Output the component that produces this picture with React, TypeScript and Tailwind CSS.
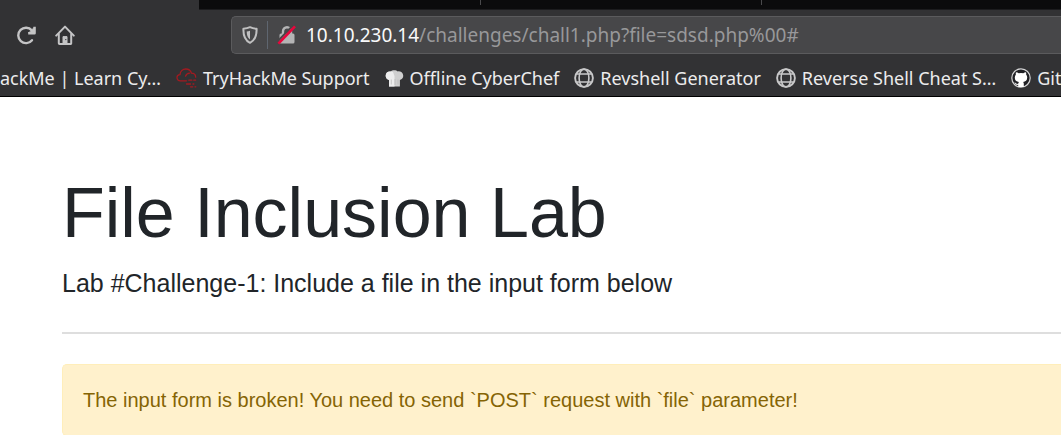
import type { ReactNode } from "react";

function ReloadIcon() {
  return (
    <svg viewBox="0 0 20 20" className="size-5" fill="none" stroke="#c4c4c5" strokeWidth="2.4" strokeLinecap="round" strokeLinejoin="round">
      <path d="M16 15.2A7.700 7.700 0 1 1 15.800 5.400" />
      <path d="M18.600 1.800v6.400h-6.400" strokeLinecap="butt" />
      <path d="M18.200 2.500v5.500h-5.500z" fill="#c4c4c5" strokeWidth="0.5" />
    </svg>
  );
}

function HomeIcon() {
  return (
    <svg viewBox="0 0 20 20" className="size-5" fill="none" stroke="#c4c4c5" strokeWidth="2" strokeLinecap="round" strokeLinejoin="round">
      <path d="M1.2 10.6 10 1.6l8.8 9" />
      <path d="M3.8 9v9.2a.8.8 0 0 0 .8.8h10.8a.8.8 0 0 0 .8-.8V9" />
      <path d="M8 18.6v-7h4v7z" fill="#c4c4c5" strokeWidth="1" />
      <circle cx="10.8" cy="14.6" r=".7" fill="#323234" stroke="none" />
    </svg>
  );
}

function ShieldIcon() {
  return (
    <svg viewBox="0 0 16 18" className="h-[18px] w-4 shrink-0">
      <path d="M8 1.2c2 1 4 1.4 6.6 1.5.2 6.500-1 11.300-6.600 14.100C2.400 14 1.200 9.200 1.400 2.700 4 2.600 6 2.200 8 1.200z" fill="none" stroke="#c0c0c1" strokeWidth="2" strokeLinejoin="round" />
      <path d="M8 4.800v8.600C5.600 11.700 4.800 9.500 4.700 5.600 6 5.500 7 5.300 8 4.800z" fill="#c0c0c1" />
    </svg>
  );
}

function InsecureLockIcon() {
  return (
    <svg viewBox="0 0 20 20" className="size-5 shrink-0">
      <path d="M6 9V6.200a4 4 0 0 1 8 0V9" fill="none" stroke="#b4b4b5" strokeWidth="2.400" />
      <rect x="2.500" y="8.500" width="15" height="10" rx="1.500" fill="#b4b4b5" />
      <path d="M0 17 15.500 1" stroke="#474749" strokeWidth="2" />
      <path d="M1.400 18.600 18 1.400" stroke="#e8063c" strokeWidth="2.600" />
    </svg>
  );
}

function CloudIcon() {
  return (
    <svg viewBox="0 0 21 20" className="h-5 w-[21px] shrink-0" fill="none" stroke="#a31a20" strokeWidth="1.300" strokeLinecap="round">
      <path d="M10.500 12.800H4.300C2 12.800 1 11.300 1 9.600c0-1.800 1.300-3 3-3C4.300 3.200 6.800 1 9.800 1c2.800 0 5 1.600 5.600 4.200 2.500 0 4.200 1.600 4.300 4" />
      <path d="M9.500 8.200c.7-1.800 2.300-2.900 4-3M12.800 12.200h3M17.800 12.200h1.800M10.500 16h4M17 16h.8M14.500 18.800h2.300M19 18.800h.8" />
    </svg>
  );
}

function ChefHatIcon() {
  return (
    <svg viewBox="0 0 19 19" className="size-[19px] shrink-0">
      <path d="M4 17.500V11C1.600 10.300.5 8.600.7 6.300.9 3.700 3 2.200 5.500 2.600 7 .8 11 .6 12.800 2.400c2.700-.4 5 1.200 5.400 3.900.3 2.400-1 4.200-3.300 4.700v6.500z" fill="#cfcfcf" />
      <path d="M4 11v6.500h5.500V7L8 3 5.500 2.600C3 2.200.9 3.700.7 6.300.5 8.600 1.600 10.300 4 11z" fill="#ededed" />
      <path d="M6.300 10.500v5M10 10v6M13 10.500v5" stroke="#b8b8b8" strokeWidth=".7" />
    </svg>
  );
}

function GlobeIcon() {
  return (
    <svg viewBox="0 0 20 20" className="size-5 shrink-0" fill="none" stroke="#c8c8c9" strokeWidth="1.600">
      <circle cx="10" cy="10" r="8.900" strokeWidth="1.900" />
      <ellipse cx="10" cy="10" rx="4.900" ry="8.900" />
      <path d="M2.500 6h15M2.500 14h15" />
    </svg>
  );
}

function GithubIcon() {
  return (
    <svg viewBox="0 0 20 20" className="size-5 shrink-0">
      <circle cx="10" cy="10" r="9.200" fill="#202024" stroke="#d4d4d5" strokeWidth="1.200" />
      <path d="M5 4.200c1 0 1.900.5 2.700 1.100a9 9 0 0 1 4.600 0c.8-.6 1.700-1.100 2.700-1.100.3.800.3 1.600.1 2.300.8.900 1.100 1.800 1.100 3 0 3-1.700 4.100-4.100 4.400.5.500.7 1.100.7 1.900v3.100H7.200v-2.100c-1.700.4-2.600-.2-3.200-1.600l-.6-.8c1.500-.1 1.800 1.400 2.900 1.500.3 0 .8-.1 1-.3.100-.7.300-1.300.6-1.700-2.400-.3-4.100-1.400-4.100-4.400 0-1.200.4-2.100 1.100-3-.2-.7-.2-1.500.1-2.300z" fill="#fff" />
    </svg>
  );
}

function Bookmark({ icon, children }: { icon: ReactNode; children: ReactNode }) {
  return (
    <a href="#" className="flex shrink-0 items-center gap-[6px]">
      {icon}
      <span>{children}</span>
    </a>
  );
}

export default function App() {
  return (
    <div className="min-h-screen overflow-hidden bg-white font-['Liberation_Sans',sans-serif] text-[#212529]">
      <header className="border-b border-black bg-[#323234] font-['Noto_Sans',sans-serif]">
        <div className="flex h-[10px]">
          <div className="w-[199px] shrink-0" />
          <div className="flex grow border-b border-[#1c1c1e] bg-[#0b0b0c]">
            <div className="h-[5px] w-[282px] border-r border-[#4a4a4c]" />
            <div className="h-[5px] w-[281px] border-r border-[#4a4a4c]" />
          </div>
        </div>
        <nav aria-label="Navigation" className="flex items-center pt-[6px] pl-4">
          <button type="button" aria-label="Reload"><ReloadIcon /></button>
          <button type="button" aria-label="Home" className="ml-[19px]"><HomeIcon /></button>
          <div className="ml-[156px] flex h-[38px] grow items-center rounded-l-[5px] border border-r-0 border-[#5b5b5d] bg-[#474749] pl-[10px]">
            <ShieldIcon />
            <div className="mx-[9px] h-7 w-px bg-[#5f6670]" />
            <InsecureLockIcon />
            <a href="#" className="ml-[9px] text-[19px] leading-7 whitespace-nowrap text-[#98989a]">
              <span className="text-[#f9f9fa]">10.10.230.14</span>/challenges/chall1.php?file=sdsd.php%00#
            </a>
          </div>
        </nav>
        <nav aria-label="Bookmarks" className="flex h-[42px] items-center gap-[15px] pt-[6px] text-[18px] leading-7 whitespace-nowrap text-[#ececed]">
          <a href="#" className="flex w-[161px] shrink-0 justify-end overflow-hidden">TryHackMe | Learn Cy…</a>
          <Bookmark icon={<CloudIcon />}>TryHackMe Support</Bookmark>
          <Bookmark icon={<ChefHatIcon />}>Offline CyberChef</Bookmark>
          <Bookmark icon={<GlobeIcon />}>Revshell Generator</Bookmark>
          <Bookmark icon={<GlobeIcon />}>Reverse Shell Cheat S…</Bookmark>
          <Bookmark icon={<GithubIcon />}>GitHub</Bookmark>
        </nav>
      </header>
      <main className="pt-[74px] pl-[62px]">
        <h1 className="text-[70px] leading-[84px]">File Inclusion Lab</h1>
        <p className="mt-[9px] text-[25px] leading-[38px]">Lab #Challenge-1: Include a file in the input form below</p>
        <hr className="mt-[30px] border-t-2 border-[#dedede]" />
        <div role="alert" className="mt-[30px] rounded-l-[5px] border border-r-0 border-[#ffeeba] bg-[#fff1cc] px-5 py-5 text-[20px] leading-[30px] text-[#856404]">
          The input form is broken! You need to send `POST` request with `file` parameter!
        </div>
      </main>
    </div>
  );
}
